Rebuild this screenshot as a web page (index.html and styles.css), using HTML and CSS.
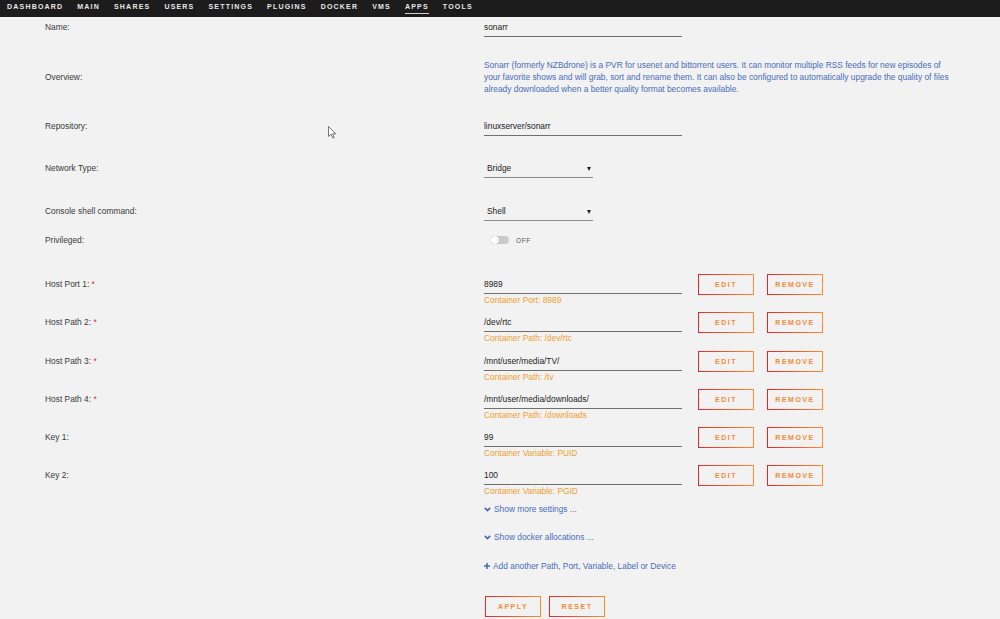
FILE: index.html
```html
<!DOCTYPE html>
<html lang="en">
<head>
    <meta charset="UTF-8">
    <title>Update Container</title>
    <link rel="stylesheet" href="styles.css">
</head>
<body>
    <nav class="menu">
        <a href="#">Dashboard</a>
        <a href="#">Main</a>
        <a href="#">Shares</a>
        <a href="#">Users</a>
        <a href="#">Settings</a>
        <a href="#">Plugins</a>
        <a href="#">Docker</a>
        <a href="#">VMs</a>
        <a href="#" class="active">Apps</a>
        <a href="#">Tools</a>
    </nav>

    <form class="form">
        <div class="row first">
            <span class="label">Name:</span>
            <div class="input">sonarr</div>
        </div>

        <div class="row overview">
            <span class="label">Overview:</span>
            <p class="desc">Sonarr (formerly NZBdrone) is a PVR for usenet and bittorrent users. It can monitor multiple RSS feeds for new episodes of<br>your favorite shows and will grab, sort and rename them. It can also be configured to automatically upgrade the quality of files<br>already downloaded when a better quality format becomes available.</p>
        </div>

        <div class="row">
            <span class="label">Repository:</span>
            <div class="input">linuxserver/sonarr</div>
        </div>

        <div class="row select-gap">
            <span class="label">Network Type:</span>
            <div class="select">Bridge</div>
        </div>

        <div class="row select-gap second">
            <span class="label">Console shell command:</span>
            <div class="select">Shell</div>
        </div>

        <div class="row small-gap">
            <span class="label">Privileged:</span>
            <div class="switch"><span class="track"><span class="knob"></span></span>OFF</div>
        </div>

        <div class="row config wide-gap">
            <span class="label">Host Port 1: <i class="req">*</i></span>
            <div class="field">
                <div class="input">8989</div>
                <div class="hint">Container Port: 8989</div>
            </div>
            <button type="button" class="btn">Edit</button>
            <button type="button" class="btn">Remove</button>
        </div>

        <div class="row config">
            <span class="label">Host Path 2: <i class="req">*</i></span>
            <div class="field">
                <div class="input">/dev/rtc</div>
                <div class="hint">Container Path: /dev/rtc</div>
            </div>
            <button type="button" class="btn">Edit</button>
            <button type="button" class="btn">Remove</button>
        </div>

        <div class="row config loose">
            <span class="label">Host Path 3: <i class="req">*</i></span>
            <div class="field">
                <div class="input">/mnt/user/media/TV/</div>
                <div class="hint">Container Path: /tv</div>
            </div>
            <button type="button" class="btn">Edit</button>
            <button type="button" class="btn">Remove</button>
        </div>

        <div class="row config">
            <span class="label">Host Path 4: <i class="req">*</i></span>
            <div class="field">
                <div class="input">/mnt/user/media/downloads/</div>
                <div class="hint">Container Path: /downloads</div>
            </div>
            <button type="button" class="btn">Edit</button>
            <button type="button" class="btn">Remove</button>
        </div>

        <div class="row config">
            <span class="label">Key 1:</span>
            <div class="field">
                <div class="input">99</div>
                <div class="hint">Container Variable: PUID</div>
            </div>
            <button type="button" class="btn">Edit</button>
            <button type="button" class="btn">Remove</button>
        </div>

        <div class="row config">
            <span class="label">Key 2:</span>
            <div class="field">
                <div class="input">100</div>
                <div class="hint">Container Variable: PGID</div>
            </div>
            <button type="button" class="btn">Edit</button>
            <button type="button" class="btn">Remove</button>
        </div>

        <div class="links">
            <a href="#" class="more">
                <svg width="7" height="5" viewBox="0 0 7 5"><path d="M0.8 0.8 L3.5 3.6 L6.2 0.8" fill="none" stroke="#486dba" stroke-width="1.7"/></svg>
                Show more settings ...
            </a>
            <a href="#" class="more docker">
                <svg width="7" height="5" viewBox="0 0 7 5"><path d="M0.8 0.8 L3.5 3.6 L6.2 0.8" fill="none" stroke="#486dba" stroke-width="1.7"/></svg>
                Show docker allocations ...
            </a>
            <a href="#" class="more add">
                <svg width="6" height="6" viewBox="0 0 6 6"><path d="M3 0 V6 M0 3 H6" stroke="#486dba" stroke-width="1.6"/></svg>
                Add another Path, Port, Variable, Label or Device
            </a>
        </div>

        <div class="actions">
            <button type="button" class="btn">Apply</button>
            <button type="button" class="btn">Reset</button>
        </div>
    </form>

    <svg class="cursor" width="9" height="13" viewBox="0 0 9 13"><path d="M0.5 0.5 V10.5 L3 8.2 L4.8 12 L6.2 11.4 L4.5 7.8 L7.8 7.8 Z" fill="#fff" stroke="#555" stroke-width="0.8"/></svg>
</body>
</html>
```

FILE: styles.css
```css
body {
    margin: 0;
    background-color: #f2f2f2;
    font-family: "Liberation Sans", Arial, sans-serif;
    font-size: 8.4px;
    color: #3a3a3a;
}
.menu {
    display: flex;
    gap: 14px;
    height: 17px;
    padding-left: 7px;
    background-color: #1c1c1c;
}
.menu a {
    color: #e8e8e8;
    text-decoration: none;
    text-transform: uppercase;
    font-weight: bold;
    font-size: 7px;
    letter-spacing: 1.2px;
    line-height: 13px;
    border-bottom: 1px solid transparent;
    height: 14px;
    box-sizing: border-box;
}
.menu a.active {
    border-bottom-color: #cfcfcf;
}
.form {
    padding-left: 45px;
    margin: 0;
}
.row {
    display: flex;
    align-items: flex-start;
    margin-top: 22px;
}
.row.first {
    margin-top: 1px;
}
.row.select-gap {
    margin-top: 23px;
}
.row.select-gap.second {
    margin-top: 24px;
}
.row.small-gap {
    margin-top: 10px;
}
.row.config {
    margin-top: 6px;
}
.row.config.loose {
    margin-top: 7px;
}
.row.config.wide-gap {
    margin-top: 25px;
}
.row.overview {
    align-items: center;
}
.label {
    width: 439px;
    flex-shrink: 0;
    line-height: 18px;
}
.req {
    font-style: normal;
    color: #e22828;
}
.input {
    width: 198px;
    height: 18px;
    line-height: 18px;
    border-bottom: 1px solid #707070;
    color: #222;
}
.desc {
    margin: 0;
    color: #486dba;
    line-height: 12px;
}
.select {
    position: relative;
    width: 106px;
    height: 18px;
    line-height: 18px;
    padding-left: 3px;
    border-bottom: 1px solid #8a8a8a;
    color: #222;
}
.select::after {
    content: "";
    position: absolute;
    right: 2px;
    top: 8px;
    border-left: 2px solid transparent;
    border-right: 2px solid transparent;
    border-top: 4px solid #222;
}
.switch {
    display: flex;
    align-items: center;
    gap: 7px;
    height: 18px;
    padding-left: 7px;
    font-size: 6.5px;
    letter-spacing: 0.6px;
    color: #555;
}
.track {
    position: relative;
    width: 18px;
    height: 8px;
    border-radius: 4px;
    background-color: #c9c9c9;
}
.knob {
    position: absolute;
    left: 0;
    top: 0;
    width: 8px;
    height: 8px;
    border-radius: 50%;
    background-color: #fff;
    box-shadow: 0 0 1px #999;
}
.config .label {
    line-height: 20px;
}
.config .input {
    height: 19px;
    line-height: 20px;
}
.field {
    width: 198px;
}
.hint {
    color: #f0a030;
    line-height: 12px;
}
.btn {
    width: 56px;
    height: 21px;
    margin: 0;
    padding: 0;
    color: #f78a34;
    border: 1px solid transparent;
    background: linear-gradient(#f2f2f2, #f2f2f2) padding-box,
                linear-gradient(90deg, #e22828, #ff8c2f) border-box;
    font-family: "Liberation Sans", Arial, sans-serif;
    font-weight: bold;
    font-size: 7px;
    letter-spacing: 1.5px;
    text-transform: uppercase;
    cursor: pointer;
}
.config .btn {
    margin-left: 16px;
}
.config .btn + .btn {
    margin-left: 13px;
}
.links {
    display: flex;
    flex-direction: column;
    margin-left: 439px;
    margin-top: 6px;
}
.more {
    display: flex;
    align-items: center;
    gap: 3px;
    height: 12px;
    color: #486dba;
    text-decoration: none;
}
.more.docker {
    margin-top: 16px;
}
.more.add {
    margin-top: 17px;
}
.actions {
    display: flex;
    gap: 8px;
    margin-left: 440px;
    margin-top: 24px;
}
.cursor {
    position: absolute;
    left: 328px;
    top: 126px;
}
```
